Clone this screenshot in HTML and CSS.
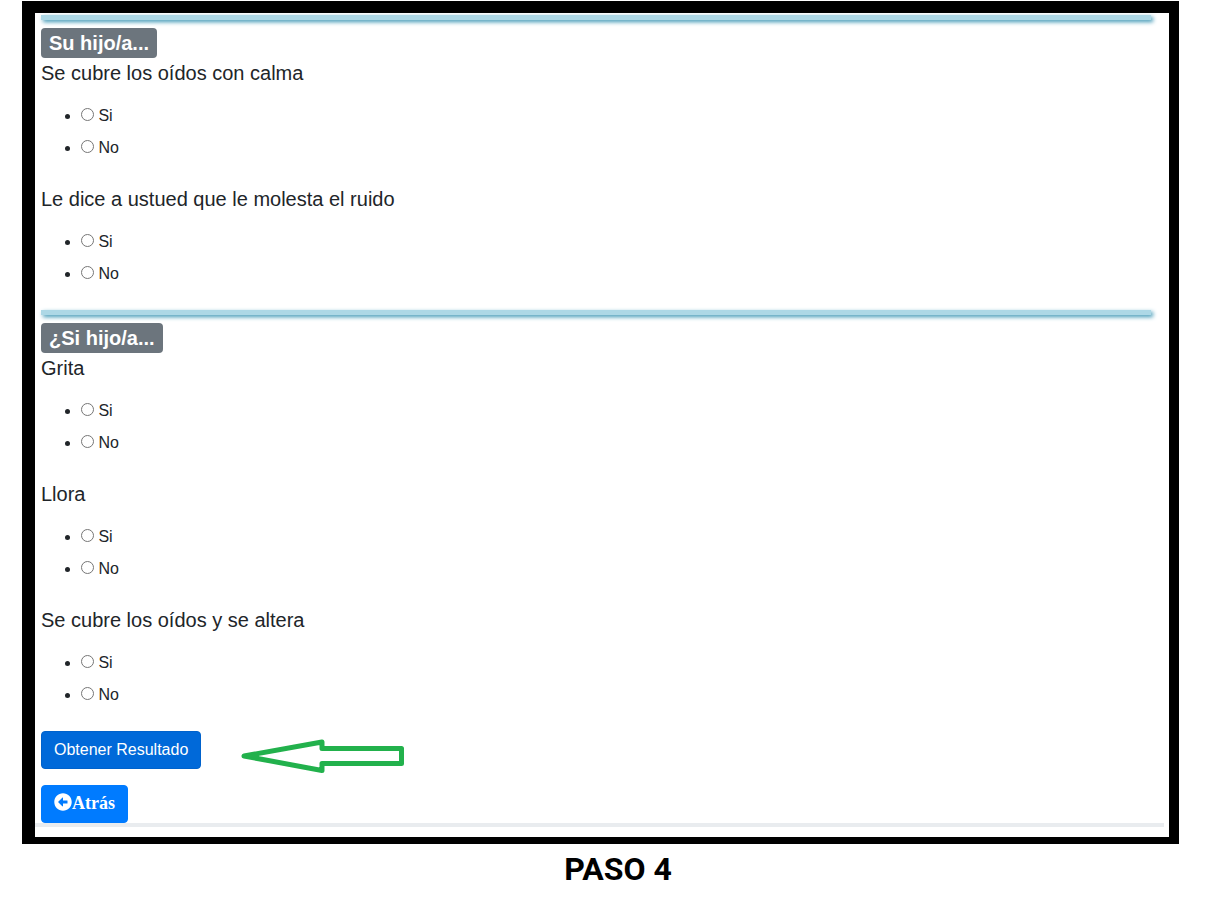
FILE: index.html
```html
<!DOCTYPE html>
<html lang="es">
<head>
<meta charset="utf-8">
<meta name="viewport" content="width=device-width, initial-scale=1">
<title>Paso 4</title>
<link rel="stylesheet" href="styles.css">
</head>
<body>
<figure class="step">
  <form class="panel">
    <div class="sections">
      <section class="section">
        <h2 class="badge">Su hijo/a...</h2>
        <fieldset class="question">
          <legend>Se cubre los oídos con calma</legend>
          <ul class="options">
            <li><label><input type="radio" name="q1"> Si</label></li>
            <li><label><input type="radio" name="q1"> No</label></li>
          </ul>
        </fieldset>
        <fieldset class="question">
          <legend>Le dice a ustued que le molesta el ruido</legend>
          <ul class="options">
            <li><label><input type="radio" name="q2"> Si</label></li>
            <li><label><input type="radio" name="q2"> No</label></li>
          </ul>
        </fieldset>
      </section>
      <section class="section">
        <h2 class="badge">¿Si hijo/a...</h2>
        <fieldset class="question">
          <legend>Grita</legend>
          <ul class="options">
            <li><label><input type="radio" name="q3"> Si</label></li>
            <li><label><input type="radio" name="q3"> No</label></li>
          </ul>
        </fieldset>
        <fieldset class="question">
          <legend>Llora</legend>
          <ul class="options">
            <li><label><input type="radio" name="q4"> Si</label></li>
            <li><label><input type="radio" name="q4"> No</label></li>
          </ul>
        </fieldset>
        <fieldset class="question">
          <legend>Se cubre los oídos y se altera</legend>
          <ul class="options">
            <li><label><input type="radio" name="q5"> Si</label></li>
            <li><label><input type="radio" name="q5"> No</label></li>
          </ul>
        </fieldset>
      </section>
    </div>
    <div class="actions">
      <div class="submit-row">
        <button class="btn btn-submit" type="button">Obtener Resultado</button>
        <svg class="pointer" width="164" height="34" viewBox="0 0 164 34" aria-hidden="true">
          <path d="M3 17L81 3V9.500H160.500V24.500H81V31.500Z" fill="none" stroke="#22b14c" stroke-width="5" stroke-linejoin="round"/>
          <path d="M3 17L18 14V20Z" fill="#22b14c"/>
        </svg>
      </div>
      <button class="btn btn-back" type="button"><svg class="icon" viewBox="0 0 512 512" aria-hidden="true"><path fill="currentColor" d="M256 504C119 504 8 393 8 256S119 8 256 8s248 111 248 248-111 248-248 248zm116-292H256v-70.900c0-10.700-13-16.100-20.500-8.500L121.200 247.500c-4.700 4.700-4.700 12.200 0 16.900l114.300 114.900c7.600 7.600 20.500 2.200 20.500-8.500V300h116c6.600 0 12-5.400 12-12v-64c0-6.600-5.400-12-12-12z"/></svg>Atrás</button>
    </div>
    <hr class="rule">
  </form>
  <figcaption class="caption">PASO 4</figcaption>
</figure>
</body>
</html>
```
FILE: styles.css
```css
* {
  box-sizing: border-box;
}

body {
  margin: 0;
  background: #fff;
  color: #212529;
  font-family: "Liberation Sans", Arial, sans-serif;
  font-size: 16px;
  line-height: 24px;
}

.step {
  margin: 1px 36px 0 22px;
}

.panel {
  padding: 2px 0 10px;
  border: solid #000;
  border-width: 12px 10px 7px 13px;
}

.sections {
  padding: 0 18px 0 6px;
}

.section::before {
  content: "";
  display: block;
  height: 5px;
  margin-bottom: 8px;
  background: #add8e6;
  box-shadow: 2px 2px 4px #3c96b4;
}

.section + .section {
  margin-top: 24px;
}

.badge {
  width: fit-content;
  margin: 0 0 3px;
  padding: 3px 8px;
  border-radius: 4px;
  background: #6c757d;
  color: #fff;
  font-size: 20px;
  font-weight: 700;
  line-height: 24px;
}

.question {
  min-width: 0;
  margin: 0;
  padding: 0;
  border: 0;
}

.question + .question {
  margin-top: 27px;
}

.question legend {
  padding: 0;
  font-size: 20px;
  line-height: 24px;
}

.options {
  display: grid;
  gap: 8px;
  margin: 0;
  padding: 19px 0 0 40px;
}

.options input {
  width: 13px;
  height: 13px;
  margin: 0;
}

.actions {
  display: flex;
  flex-direction: column;
  align-items: flex-start;
  gap: 16px;
  padding: 24px 17px 0 6px;
}

.submit-row {
  position: relative;
}

.pointer {
  position: absolute;
  top: 8px;
  left: 200px;
}

.btn {
  display: block;
  padding: 6px 12px;
  border: 1px solid #007bff;
  border-radius: 4px;
  background: #007bff;
  color: #fff;
  font-family: inherit;
  font-size: 16px;
  line-height: 24px;
}

.btn-submit {
  border-color: #0062cc;
  background: #0069d9;
}

.btn-back {
  padding: 5px 12px 7px;
  font-family: "Liberation Serif", "Times New Roman", serif;
  font-size: 18px;
  font-weight: 700;
}

.icon {
  width: 18px;
  height: 18px;
  vertical-align: -2px;
}

.rule {
  height: 4px;
  margin: 0 5px 0 0;
  border: 0;
  background: #e9ecef;
}

.caption {
  padding: 5px 0 0 35px;
  color: #000;
  font-family: Roboto, sans-serif;
  font-size: 32px;
  font-weight: 700;
  line-height: 40px;
  text-align: center;
}
```
